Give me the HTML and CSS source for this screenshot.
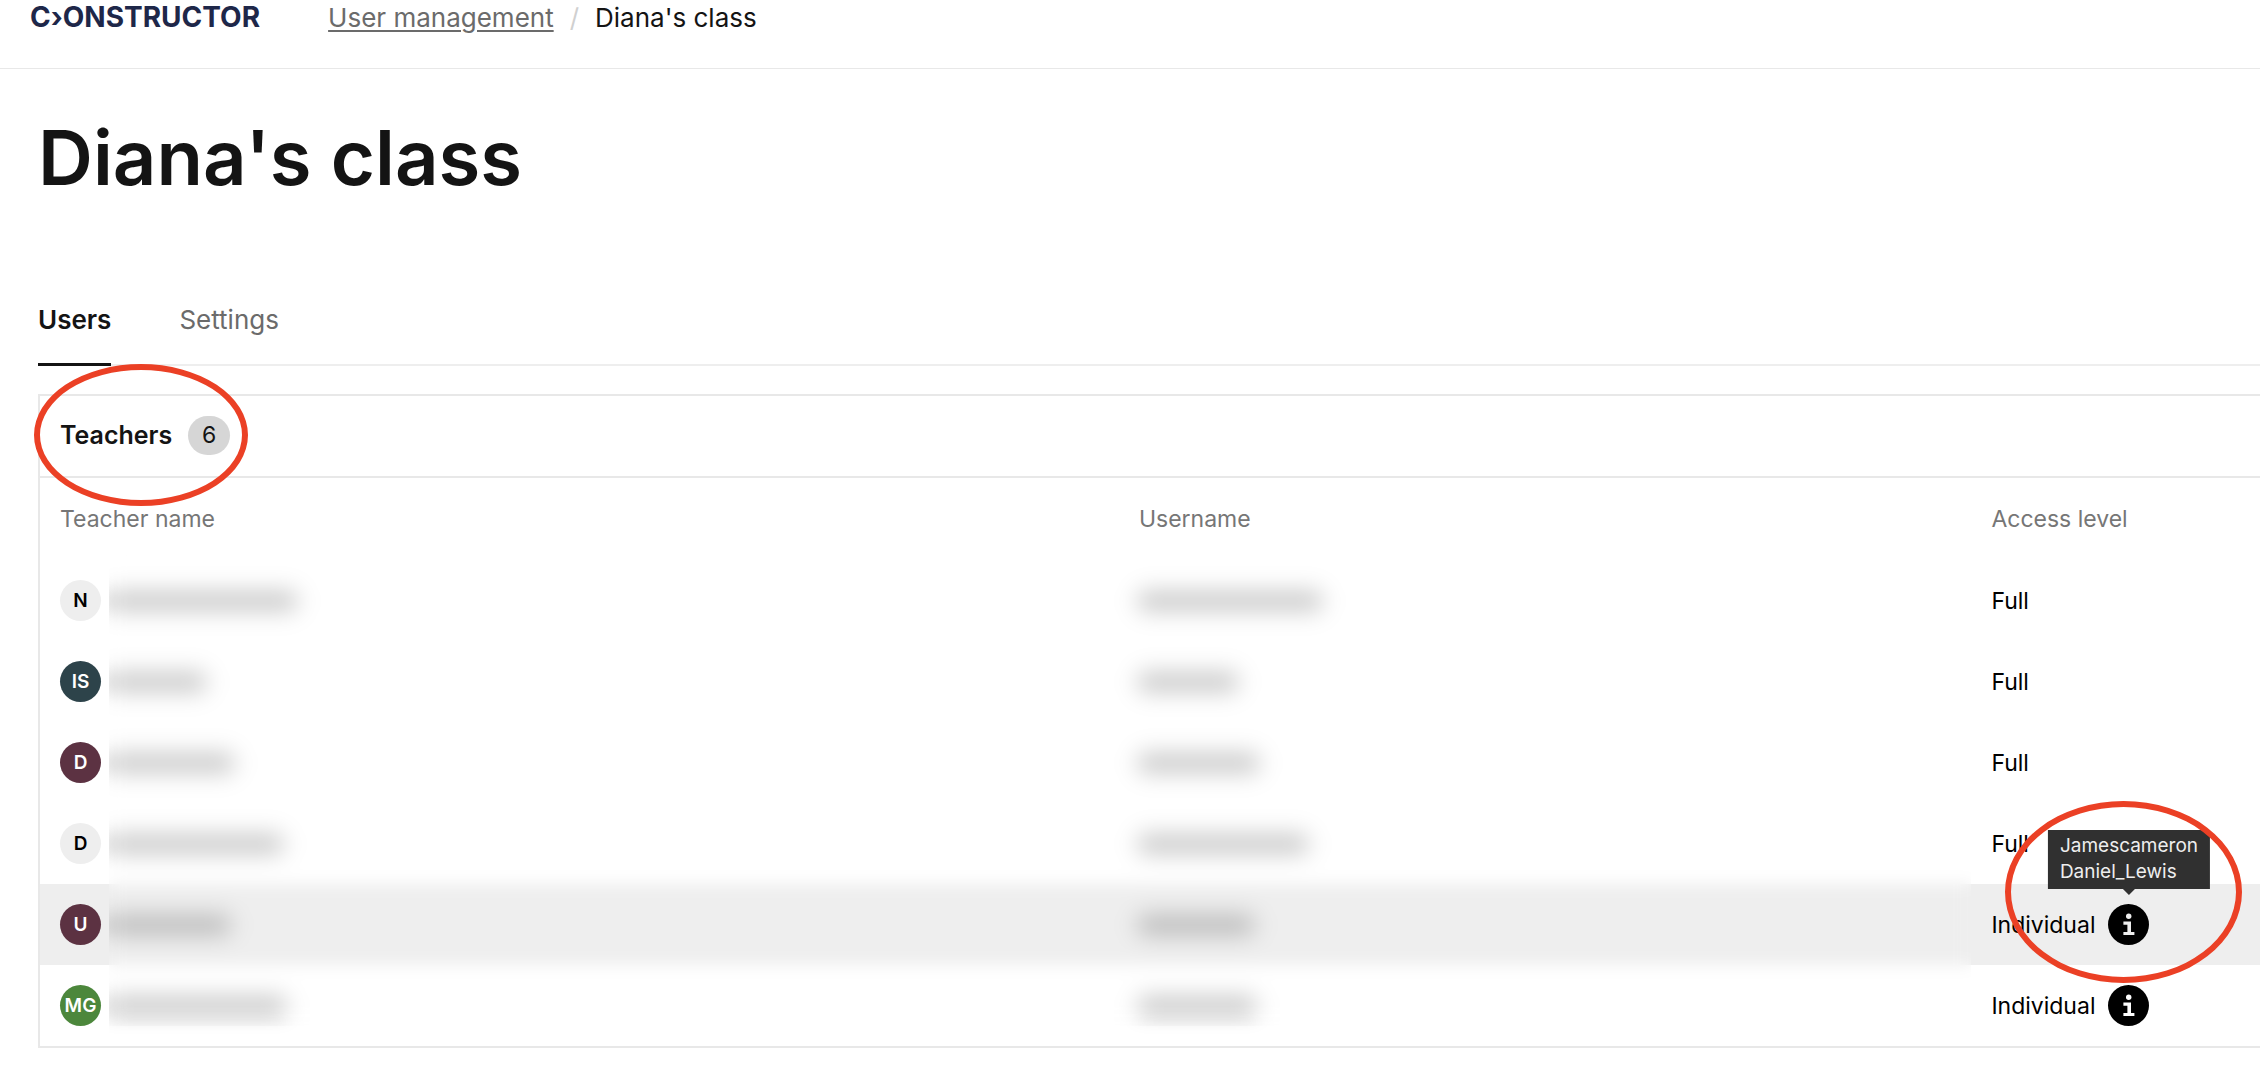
FILE: index.html
```
<!DOCTYPE html>
<html lang="en">
<head>
    <meta charset="UTF-8">
    <meta name="viewport" content="width=device-width, initial-scale=1.0">
    <title>Diana's class</title>
    <link rel="stylesheet" href="styles.css">
</head>
<body>
    <header class="header">
        <a class="logo" href="#">C›ONSTRUCTOR</a>
        <nav class="breadcrumb">
            <a href="#">User management</a>
            <span class="slash">/</span>
            <span>Diana's class</span>
        </nav>
    </header>

    <main class="content">
        <h1>Diana's class</h1>

        <div class="tabs">
            <button class="tab tab-active">Users</button>
            <button class="tab">Settings</button>
        </div>

        <section class="panel">
            <div class="panel-header">
                <h2>Teachers</h2>
                <span class="count">6</span>
                <div class="ring ring-teachers"></div>
            </div>

            <div class="table-wrap">
                <table>
                    <colgroup>
                        <col class="col-name">
                        <col class="col-username">
                        <col class="col-access">
                    </colgroup>
                    <thead>
                        <tr>
                            <th>Teacher name</th>
                            <th>Username</th>
                            <th>Access level</th>
                        </tr>
                    </thead>
                    <tbody>
                        <tr>
                            <td><div class="cell"><span class="avatar">N</span><span class="name"><span class="hidden-text" style="width: 187px"></span></span></div></td>
                            <td><div class="cell"><span class="hidden-text" style="width: 182px"></span></div></td>
                            <td>Full</td>
                        </tr>
                        <tr>
                            <td><div class="cell"><span class="avatar avatar-teal">IS</span><span class="name"><span class="hidden-text" style="width: 96px"></span></span></div></td>
                            <td><div class="cell"><span class="hidden-text" style="width: 98px"></span></div></td>
                            <td>Full</td>
                        </tr>
                        <tr>
                            <td><div class="cell"><span class="avatar avatar-plum">D</span><span class="name"><span class="hidden-text" style="width: 124px"></span></span></div></td>
                            <td><div class="cell"><span class="hidden-text" style="width: 119px"></span></div></td>
                            <td>Full</td>
                        </tr>
                        <tr>
                            <td><div class="cell"><span class="avatar">D</span><span class="name"><span class="hidden-text" style="width: 173px"></span></span></div></td>
                            <td><div class="cell"><span class="hidden-text" style="width: 168px"></span></div></td>
                            <td>Full</td>
                        </tr>
                        <tr class="row-hover">
                            <td><div class="cell"><span class="avatar avatar-plum">U</span><span class="name"><span class="hidden-text" style="width: 120px"></span></span></div></td>
                            <td><div class="cell"><span class="hidden-text" style="width: 114px"></span></div></td>
                            <td>
                                <div class="cell access">
                                    Individual
                                    <button class="info" aria-label="Show students">
                                        <svg width="41" height="41" viewBox="0 0 41 41">
                                            <circle cx="20.5" cy="20.5" r="20.5" fill="#000"/>
                                            <circle cx="20.7" cy="12.3" r="2.7" fill="#eee"/>
                                            <path d="M15.4 17.5h7.6v10.4h3.4v3.2H15.4v-3.2h4v-7.2h-4z" fill="#eee"/>
                                        </svg>
                                        <span class="tooltip">Jamescameron<br>Daniel_Lewis</span>
                                        <span class="ring ring-info"></span>
                                    </button>
                                </div>
                            </td>
                        </tr>
                        <tr>
                            <td><div class="cell"><span class="avatar avatar-green">MG</span><span class="name"><span class="hidden-text" style="width: 176px"></span></span></div></td>
                            <td><div class="cell"><span class="hidden-text" style="width: 116px"></span></div></td>
                            <td>
                                <div class="cell access">
                                    Individual
                                    <button class="info" aria-label="Show students">
                                        <svg width="41" height="41" viewBox="0 0 41 41">
                                            <circle cx="20.5" cy="20.5" r="20.5" fill="#000"/>
                                            <circle cx="20.7" cy="12.3" r="2.7" fill="#fff"/>
                                            <path d="M15.4 17.5h7.6v10.4h3.4v3.2H15.4v-3.2h4v-7.2h-4z" fill="#fff"/>
                                        </svg>
                                    </button>
                                </div>
                            </td>
                        </tr>
                    </tbody>
                </table>
                <!-- blurs names and usernames -->
                <div class="privacy-blur"></div>
            </div>
        </section>
    </main>
</body>
</html>
```
FILE: styles.css
```
* {
    box-sizing: border-box;
}
body {
    margin: 0;
    font-family: Inter, "Liberation Sans", sans-serif;
    font-size: 23px;
    color: #000;
    background-color: #fff;
    overflow-x: hidden;
}
button {
    font-family: inherit;
    border: none;
    background: none;
    padding: 0;
    cursor: pointer;
}
.header {
    display: flex;
    align-items: center;
    gap: 68px;
    padding: 0 30px 33px;
    line-height: 35px;
    border-bottom: 1px solid #e8e8e8;
}
.logo {
    font-size: 28px;
    font-weight: 700;
    color: #1e2749;
    text-decoration: none;
}
.breadcrumb {
    display: flex;
    gap: 16px;
    font-size: 26px;
    color: #141414;
}
.breadcrumb a {
    color: #6b6b6b;
    text-underline-offset: 3px;
}
.slash {
    color: #d0d0d0;
}
.content {
    padding-left: 38px;
}
h1 {
    margin: 40px 0 99px;
    font-size: 76px;
    line-height: 96px;
    font-weight: 600;
    color: #141414;
}
.tabs {
    display: flex;
    gap: 68px;
    box-shadow: inset 0 -2px #eee;
}
.tab {
    padding-bottom: 27px;
    border-bottom: 3px solid transparent;
    font-size: 26px;
    line-height: 32px;
    color: #6b6b6b;
}
.tab-active {
    font-weight: 600;
    color: #141414;
    border-bottom-color: #141414;
}
.panel {
    margin-top: 28px;
    border: 2px solid #e8e8e8;
    border-right: none;
}
.panel-header {
    position: relative;
    display: flex;
    align-items: center;
    gap: 16px;
    height: 82px;
    padding: 0 0 2px 20px;
    border-bottom: 2px solid #e8e8e8;
}
h2 {
    margin: 0;
    font-size: 25px;
    font-weight: 600;
    color: #141414;
}
.count {
    width: 42px;
    border-radius: 20px;
    background-color: #d6d6d6;
    line-height: 39px;
    text-align: center;
    color: #141414;
}
.table-wrap {
    position: relative;
}
table {
    width: 100%;
    table-layout: fixed;
    border-collapse: collapse;
}
.col-name {
    width: 48.6%;
}
.col-username {
    width: 38.4%;
}
.col-access {
    width: 13%;
}
th, td {
    height: 81px;
    padding: 0 0 0 20px;
    text-align: left;
}
th {
    height: 82px;
    font-weight: 400;
    color: #767676;
}
.row-hover {
    background-color: #eee;
}
.cell {
    display: flex;
    align-items: center;
}
.access {
    gap: 13px;
}
.avatar {
    width: 41px;
    border-radius: 50%;
    background-color: #eee;
    font-size: 19px;
    font-weight: 600;
    line-height: 41px;
    text-align: center;
}
.avatar-teal {
    background-color: #2d434a;
    color: #fff;
}
.avatar-plum {
    background-color: #5c3242;
    color: #fff;
}
.avatar-green {
    background-color: #4c873c;
    color: #fff;
}
.name {
    flex: 1;
    display: flex;
    align-items: center;
    height: 80px;
    margin-left: 8px;
    overflow: hidden;
}
.hidden-text {
    height: 18px;
    background-color: rgba(0, 0, 0, 0.24);
    filter: blur(9px);
}
.privacy-blur {
    position: absolute;
    top: 60px;
    bottom: 20px;
    left: 69px;
    right: 13%;
    backdrop-filter: blur(8px);
}
.info {
    position: relative;
    width: 41px;
    height: 41px;
}
.info svg {
    display: block;
}
.tooltip {
    position: absolute;
    bottom: 56px;
    left: 50%;
    transform: translateX(-50%);
    padding: 3px 12px 4px;
    background-color: #303030;
    color: #eee;
    font-size: 19px;
    line-height: 26px;
    text-align: left;
}
.tooltip::after {
    content: "";
    position: absolute;
    top: 100%;
    left: 50%;
    margin-left: -6px;
    border: 6px solid transparent;
    border-top-color: #303030;
}
.ring {
    position: absolute;
    border: 6px solid #eb4025;
    border-radius: 50%;
    pointer-events: none;
}
.ring-teachers {
    top: -32px;
    left: -6px;
    width: 214px;
    height: 142px;
}
.ring-info {
    top: -103px;
    left: -103px;
    width: 237px;
    height: 182px;
}
```
